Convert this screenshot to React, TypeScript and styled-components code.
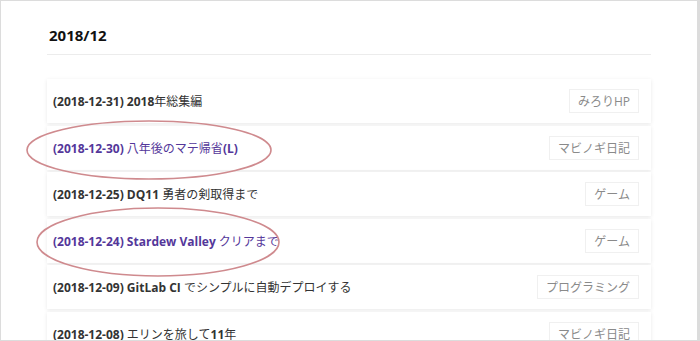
import React from 'react';
import styled, { createGlobalStyle } from 'styled-components';

const GlobalStyle = createGlobalStyle`
  html, body { margin: 0; padding: 0; background: #fff; }
  body {
    font-family: "Open Sans", "Noto Sans CJK JP", sans-serif;
    color: #333;
  }
`;

const Frame = styled.div`
  position: relative;
  box-sizing: border-box;
  height: 100vh;
  border: 1px solid #dcdcdc;
  border-right-width: 3px;
  overflow: hidden;
`;

const Section = styled.section`
  width: 604px;
  margin-left: 46px;
  padding-top: 24px;
`;

const Heading = styled.h2`
  margin: 0;
  padding: 0 2px 9px;
  font-size: 15px;
  line-height: 20px;
  font-weight: 700;
  color: #111;
  border-bottom: 1px solid #ececec;
`;

const List = styled.ul`
  list-style: none;
  margin: 24px 0 0;
  padding: 0;
  display: flex;
  flex-direction: column;
  gap: 2.6px;
`;

const Card = styled.li`
  display: flex;
  align-items: center;
  justify-content: space-between;
  height: 44px;
  padding: 0 12px 0 6px;
  background: #fff;
  box-shadow: 0 1px 4px rgba(0, 0, 0, 0.09);
`;

const Title = styled.a<{ $visited?: boolean }>`
  font-size: 12px;
  color: ${p => (p.$visited ? '#54379a' : '#333')};
  text-decoration: none;
  white-space: nowrap;
`;

const Latin = styled.span`
  font-weight: 700;
`;

const Tag = styled.span`
  box-sizing: border-box;
  height: 24px;
  display: inline-flex;
  align-items: center;
  padding: 0 8px;
  font-size: 12px;
  color: #8a8a8a;
  border: 1px solid #f0f0f0;
  background: #fff;
  white-space: nowrap;
`;

const Marks = styled.svg`
  position: absolute;
  left: 0;
  top: 0;
  pointer-events: none;
`;

type Post = { title: string; tag: string; visited?: boolean };

const posts: Post[] = [
  { title: '(2018-12-31) 2018年総集編', tag: 'みろりHP' },
  { title: '(2018-12-30) 八年後のマテ帰省(L)', tag: 'マビノギ日記', visited: true },
  { title: '(2018-12-25) DQ11 勇者の剣取得まで', tag: 'ゲーム' },
  { title: '(2018-12-24) Stardew Valley クリアまで', tag: 'ゲーム', visited: true },
  { title: '(2018-12-09) GitLab CI でシンプルに自動デプロイする', tag: 'プログラミング' },
  { title: '(2018-12-08) エリンを旅して11年', tag: 'マビノギ日記' },
];

// ASCII runs are set heavier than the Japanese text
const renderTitle = (text: string) =>
  text.split(/([\x21-\x7e]+(?: [\x21-\x7e]+)*)/).map((part, i) =>
    /^[\x21-\x7e]/.test(part) ? <Latin key={i}>{part}</Latin> : part
  );

const App: React.FC = () => (
  <>
    <GlobalStyle />
    <Frame>
      <Section>
        <Heading>2018/12</Heading>
        <List>
          {posts.map(p => (
            <Card key={p.title}>
              <Title href="#" $visited={p.visited}>{renderTitle(p.title)}</Title>
              <Tag>{p.tag}</Tag>
            </Card>
          ))}
        </List>
      </Section>
      <Marks width="700" height="341">
        <ellipse cx="148" cy="149" rx="122" ry="29" fill="none" stroke="#cf8a8e" strokeWidth="1.6" />
        <ellipse cx="157" cy="241" rx="121" ry="34" fill="none" stroke="#cf8a8e" strokeWidth="1.6" />
      </Marks>
    </Frame>
  </>
);

export default App;
